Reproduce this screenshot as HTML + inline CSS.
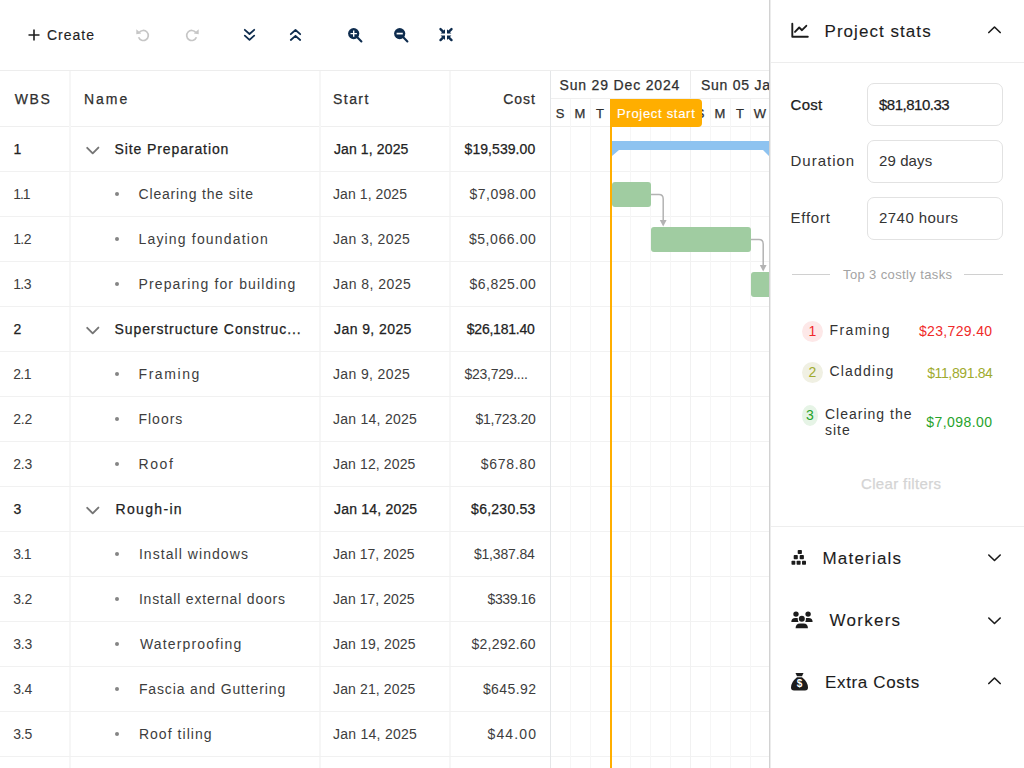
<!DOCTYPE html>
<html><head><meta charset="utf-8"><style>
html,body{margin:0;padding:0}
body{width:1024px;height:768px;overflow:hidden;position:relative;background:#fff;font-family:"Liberation Sans",sans-serif}
.t{position:absolute;line-height:1;white-space:nowrap}
.r{position:absolute}
svg{position:absolute;overflow:visible}
</style></head><body>
<svg style="left:28px;top:29px" width="12" height="12" viewBox="0 0 12 12"><path d="M6 0.5V11.5M0.5 6H11.5" stroke="#1f1f1f" stroke-width="1.6" fill="none"/></svg>
<div class="t" style="left:47px;top:27.5px;font-size:14px;font-weight:400;color:#1f1f1f;letter-spacing:1.0px;-webkit-text-stroke:0.15px #1f1f1f;">Create</div>
<svg style="left:136px;top:28px" width="13" height="13" viewBox="0 0 13 13"><path d="M3.2 4.6 A5 5 0 1 1 2.6 9.2" stroke="#c6c6c6" stroke-width="1.7" fill="none"/><path d="M0.3 1.2 L5.2 5.6 L0.3 6.2 Z" fill="#c6c6c6"/></svg>
<svg style="left:186px;top:28px" width="13" height="13" viewBox="0 0 13 13"><g transform="translate(13 0) scale(-1 1)"><path d="M3.2 4.6 A5 5 0 1 1 2.6 9.2" stroke="#c6c6c6" stroke-width="1.7" fill="none"/><path d="M0.3 1.2 L5.2 5.6 L0.3 6.2 Z" fill="#c6c6c6"/></g></svg>
<svg style="left:244px;top:29px" width="11" height="12" viewBox="0 0 11 12"><path d="M0.8 0.8 L5.5 5 L10.2 0.8 M0.8 6.6 L5.5 10.8 L10.2 6.6" stroke="#0e2c4e" stroke-width="1.8" fill="none" stroke-linecap="round" stroke-linejoin="round"/></svg>
<svg style="left:289.5px;top:28.5px" width="11" height="12" viewBox="0 0 11 12"><path d="M0.8 5.2 L5.5 1 L10.2 5.2 M0.8 11 L5.5 6.8 L10.2 11" stroke="#0e2c4e" stroke-width="1.8" fill="none" stroke-linecap="round" stroke-linejoin="round"/></svg>
<svg style="left:347.7px;top:27.7px" width="15" height="14" viewBox="0 0 15 14"><circle cx="5.7" cy="5.6" r="5.6" fill="#0e2c4e"/><path d="M9.3 9.3 L13.4 13.4" stroke="#0e2c4e" stroke-width="2.1" stroke-linecap="round"/><path d="M5.7 2.4 V8.8 M2.5 5.6 H8.9" stroke="#fff" stroke-width="1.4"/></svg>
<svg style="left:393.5px;top:27.7px" width="15" height="14" viewBox="0 0 15 14"><circle cx="5.7" cy="5.6" r="5.6" fill="#0e2c4e"/><path d="M9.3 9.3 L13.4 13.4" stroke="#0e2c4e" stroke-width="2.1" stroke-linecap="round"/><path d="M2.6 5.6 H8.8" stroke="#fff" stroke-width="1.7"/></svg>
<svg style="left:438.5px;top:28px" width="14" height="14" viewBox="-7 -6.5 14 14"><g fill="#0e2c4e"><g transform="translate(-0.1 0)"><path d="M-0.9 -5.3 V-0.9 H-5.3 Z"/><path d="M-5.4 -5.4 L-2.6 -2.6" stroke="#0e2c4e" stroke-width="2.4" stroke-linecap="round"/></g><g transform="translate(0.1 0) scale(-1 1)"><path d="M-0.9 -5.3 V-0.9 H-5.3 Z"/><path d="M-5.4 -5.4 L-2.6 -2.6" stroke="#0e2c4e" stroke-width="2.4" stroke-linecap="round"/></g><g transform="translate(-0.1 0.2) scale(1 -1)"><path d="M-0.9 -5.3 V-0.9 H-5.3 Z"/><path d="M-5.4 -5.4 L-2.6 -2.6" stroke="#0e2c4e" stroke-width="2.4" stroke-linecap="round"/></g><g transform="translate(0.1 0.2) scale(-1 -1)"><path d="M-0.9 -5.3 V-0.9 H-5.3 Z"/><path d="M-5.4 -5.4 L-2.6 -2.6" stroke="#0e2c4e" stroke-width="2.4" stroke-linecap="round"/></g></g></svg>
<div class="r" style="left:0px;top:70px;width:769px;height:1px;background:#ededed;"></div>
<div class="r" style="left:0px;top:126px;width:769px;height:1px;background:#efefef;"></div>
<div class="r" style="left:69px;top:71px;width:2px;height:697px;background:#f6f6f6;"></div>
<div class="r" style="left:319px;top:71px;width:2px;height:697px;background:#f6f6f6;"></div>
<div class="r" style="left:449px;top:71px;width:2px;height:697px;background:#f6f6f6;"></div>
<div class="r" style="left:550px;top:71px;width:1px;height:697px;background:#e4e6e8;"></div>
<div class="r" style="left:0px;top:171px;width:550px;height:1px;background:#f1f1f1;"></div>
<div class="r" style="left:551px;top:171px;width:218px;height:1px;background:#f2f2f2;"></div>
<div class="r" style="left:0px;top:216px;width:550px;height:1px;background:#f1f1f1;"></div>
<div class="r" style="left:551px;top:216px;width:218px;height:1px;background:#f2f2f2;"></div>
<div class="r" style="left:0px;top:261px;width:550px;height:1px;background:#f1f1f1;"></div>
<div class="r" style="left:551px;top:261px;width:218px;height:1px;background:#f2f2f2;"></div>
<div class="r" style="left:0px;top:306px;width:550px;height:1px;background:#f1f1f1;"></div>
<div class="r" style="left:551px;top:306px;width:218px;height:1px;background:#f2f2f2;"></div>
<div class="r" style="left:0px;top:351px;width:550px;height:1px;background:#f1f1f1;"></div>
<div class="r" style="left:551px;top:351px;width:218px;height:1px;background:#f2f2f2;"></div>
<div class="r" style="left:0px;top:396px;width:550px;height:1px;background:#f1f1f1;"></div>
<div class="r" style="left:551px;top:396px;width:218px;height:1px;background:#f2f2f2;"></div>
<div class="r" style="left:0px;top:441px;width:550px;height:1px;background:#f1f1f1;"></div>
<div class="r" style="left:551px;top:441px;width:218px;height:1px;background:#f2f2f2;"></div>
<div class="r" style="left:0px;top:486px;width:550px;height:1px;background:#f1f1f1;"></div>
<div class="r" style="left:551px;top:486px;width:218px;height:1px;background:#f2f2f2;"></div>
<div class="r" style="left:0px;top:531px;width:550px;height:1px;background:#f1f1f1;"></div>
<div class="r" style="left:551px;top:531px;width:218px;height:1px;background:#f2f2f2;"></div>
<div class="r" style="left:0px;top:576px;width:550px;height:1px;background:#f1f1f1;"></div>
<div class="r" style="left:551px;top:576px;width:218px;height:1px;background:#f2f2f2;"></div>
<div class="r" style="left:0px;top:621px;width:550px;height:1px;background:#f1f1f1;"></div>
<div class="r" style="left:551px;top:621px;width:218px;height:1px;background:#f2f2f2;"></div>
<div class="r" style="left:0px;top:666px;width:550px;height:1px;background:#f1f1f1;"></div>
<div class="r" style="left:551px;top:666px;width:218px;height:1px;background:#f2f2f2;"></div>
<div class="r" style="left:0px;top:711px;width:550px;height:1px;background:#f1f1f1;"></div>
<div class="r" style="left:551px;top:711px;width:218px;height:1px;background:#f2f2f2;"></div>
<div class="r" style="left:0px;top:756px;width:550px;height:1px;background:#f1f1f1;"></div>
<div class="r" style="left:551px;top:756px;width:218px;height:1px;background:#f2f2f2;"></div>
<div class="t" style="left:14.8px;top:92px;font-size:14px;font-weight:400;color:#2f2f2f;letter-spacing:1.6px;-webkit-text-stroke:0.25px #2f2f2f;">WBS</div>
<div class="t" style="left:84px;top:92px;font-size:14px;font-weight:400;color:#2f2f2f;letter-spacing:1.95px;-webkit-text-stroke:0.25px #2f2f2f;">Name</div>
<div class="t" style="left:333px;top:92px;font-size:14px;font-weight:400;color:#2f2f2f;letter-spacing:1.45px;-webkit-text-stroke:0.25px #2f2f2f;">Start</div>
<div class="t" style="right:488px;top:92px;font-size:14px;font-weight:400;color:#2f2f2f;letter-spacing:1.0px;-webkit-text-stroke:0.25px #2f2f2f;">Cost</div>
<div class="t" style="left:13.5px;top:142.2px;font-size:14px;font-weight:400;color:#222;letter-spacing:0px;-webkit-text-stroke:0.25px #222;">1</div>
<svg style="left:87px;top:146.0px" width="13" height="8" viewBox="0 0 13 8"><path d="M0.2 1.8 L5.7 7.3 L11.4 1.6" stroke="#757575" stroke-width="1.9" fill="none" stroke-linecap="round" stroke-linejoin="round"/></svg>
<div class="t" style="left:114.5px;top:142.2px;font-size:14px;font-weight:400;color:#222;letter-spacing:0.9px;-webkit-text-stroke:0.25px #222;">Site Preparation</div>
<div class="t" style="left:333.9px;top:142.2px;font-size:14px;font-weight:400;color:#222;letter-spacing:0.13px;-webkit-text-stroke:0.25px #222;">Jan 1, 2025</div>
<div class="t" style="left:464.6px;top:142.2px;font-size:14px;font-weight:400;color:#222;letter-spacing:0.056px;-webkit-text-stroke:0.25px #222;">$19,539.00</div>
<div class="t" style="left:13.2px;top:187.2px;font-size:14px;font-weight:400;color:#3d3d3d;letter-spacing:-1.0px;">1.1</div>
<div class="r" style="left:114.5px;top:192.0px;width:4.4px;height:4.4px;border-radius:50%;background:#858585"></div>
<div class="t" style="left:138.5px;top:187.2px;font-size:14px;font-weight:400;color:#3d3d3d;letter-spacing:0.83px;">Clearing the site</div>
<div class="t" style="left:333.0px;top:187.2px;font-size:14px;font-weight:400;color:#3d3d3d;letter-spacing:0.08px;">Jan 1, 2025</div>
<div class="t" style="left:469.4px;top:187.2px;font-size:14px;font-weight:400;color:#3d3d3d;letter-spacing:0.513px;">$7,098.00</div>
<div class="t" style="left:13.2px;top:232.2px;font-size:14px;font-weight:400;color:#3d3d3d;letter-spacing:-0.6px;">1.2</div>
<div class="r" style="left:114.5px;top:237.0px;width:4.4px;height:4.4px;border-radius:50%;background:#858585"></div>
<div class="t" style="left:138.5px;top:232.2px;font-size:14px;font-weight:400;color:#3d3d3d;letter-spacing:1.17px;">Laying foundation</div>
<div class="t" style="left:333.0px;top:232.2px;font-size:14px;font-weight:400;color:#3d3d3d;letter-spacing:0.37px;">Jan 3, 2025</div>
<div class="t" style="left:468.9px;top:232.2px;font-size:14px;font-weight:400;color:#3d3d3d;letter-spacing:0.575px;">$5,066.00</div>
<div class="t" style="left:13.2px;top:277.2px;font-size:14px;font-weight:400;color:#3d3d3d;letter-spacing:-0.6px;">1.3</div>
<div class="r" style="left:114.5px;top:282.0px;width:4.4px;height:4.4px;border-radius:50%;background:#858585"></div>
<div class="t" style="left:138.5px;top:277.2px;font-size:14px;font-weight:400;color:#3d3d3d;letter-spacing:1.13px;">Preparing for building</div>
<div class="t" style="left:333.0px;top:277.2px;font-size:14px;font-weight:400;color:#3d3d3d;letter-spacing:0.47px;">Jan 8, 2025</div>
<div class="t" style="left:469.4px;top:277.2px;font-size:14px;font-weight:400;color:#3d3d3d;letter-spacing:0.513px;">$6,825.00</div>
<div class="t" style="left:13.5px;top:322.2px;font-size:14px;font-weight:400;color:#222;letter-spacing:0px;-webkit-text-stroke:0.25px #222;">2</div>
<svg style="left:87px;top:326.0px" width="13" height="8" viewBox="0 0 13 8"><path d="M0.2 1.8 L5.7 7.3 L11.4 1.6" stroke="#757575" stroke-width="1.9" fill="none" stroke-linecap="round" stroke-linejoin="round"/></svg>
<div class="t" style="left:114.5px;top:322.2px;font-size:14px;font-weight:400;color:#222;letter-spacing:0.91px;-webkit-text-stroke:0.25px #222;">Superstructure Construc...</div>
<div class="t" style="left:334.0px;top:322.2px;font-size:14px;font-weight:400;color:#222;letter-spacing:0.42px;-webkit-text-stroke:0.25px #222;">Jan 9, 2025</div>
<div class="t" style="left:466.8px;top:322.2px;font-size:14px;font-weight:400;color:#222;letter-spacing:-0.233px;-webkit-text-stroke:0.25px #222;">$26,181.40</div>
<div class="t" style="left:13.2px;top:367.2px;font-size:14px;font-weight:400;color:#3d3d3d;letter-spacing:-0.6px;">2.1</div>
<div class="r" style="left:114.5px;top:372.0px;width:4.4px;height:4.4px;border-radius:50%;background:#858585"></div>
<div class="t" style="left:138.5px;top:367.2px;font-size:14px;font-weight:400;color:#3d3d3d;letter-spacing:1.58px;">Framing</div>
<div class="t" style="left:333.0px;top:367.2px;font-size:14px;font-weight:400;color:#3d3d3d;letter-spacing:0.37px;">Jan 9, 2025</div>
<div class="t" style="left:464.6px;top:367.2px;font-size:14px;font-weight:400;color:#3d3d3d;letter-spacing:-0.28px;">$23,729....</div>
<div class="t" style="left:13.2px;top:412.2px;font-size:14px;font-weight:400;color:#3d3d3d;letter-spacing:-0.2px;">2.2</div>
<div class="r" style="left:114.5px;top:417.0px;width:4.4px;height:4.4px;border-radius:50%;background:#858585"></div>
<div class="t" style="left:138.5px;top:412.2px;font-size:14px;font-weight:400;color:#3d3d3d;letter-spacing:0.98px;">Floors</div>
<div class="t" style="left:333.0px;top:412.2px;font-size:14px;font-weight:400;color:#3d3d3d;letter-spacing:0.264px;">Jan 14, 2025</div>
<div class="t" style="left:475.4px;top:412.2px;font-size:14px;font-weight:400;color:#3d3d3d;letter-spacing:-0.237px;">$1,723.20</div>
<div class="t" style="left:13.2px;top:457.2px;font-size:14px;font-weight:400;color:#3d3d3d;letter-spacing:-0.2px;">2.3</div>
<div class="r" style="left:114.5px;top:462.0px;width:4.4px;height:4.4px;border-radius:50%;background:#858585"></div>
<div class="t" style="left:138.5px;top:457.2px;font-size:14px;font-weight:400;color:#3d3d3d;letter-spacing:1.57px;">Roof</div>
<div class="t" style="left:333.0px;top:457.2px;font-size:14px;font-weight:400;color:#3d3d3d;letter-spacing:0.127px;">Jan 12, 2025</div>
<div class="t" style="left:480.7px;top:457.2px;font-size:14px;font-weight:400;color:#3d3d3d;letter-spacing:0.7px;">$678.80</div>
<div class="t" style="left:13.5px;top:502.2px;font-size:14px;font-weight:400;color:#222;letter-spacing:0px;-webkit-text-stroke:0.25px #222;">3</div>
<svg style="left:87px;top:506.0px" width="13" height="8" viewBox="0 0 13 8"><path d="M0.2 1.8 L5.7 7.3 L11.4 1.6" stroke="#757575" stroke-width="1.9" fill="none" stroke-linecap="round" stroke-linejoin="round"/></svg>
<div class="t" style="left:115.5px;top:502.2px;font-size:14px;font-weight:400;color:#222;letter-spacing:1.33px;-webkit-text-stroke:0.25px #222;">Rough-in</div>
<div class="t" style="left:334.0px;top:502.2px;font-size:14px;font-weight:400;color:#222;letter-spacing:0.2px;-webkit-text-stroke:0.25px #222;">Jan 14, 2025</div>
<div class="t" style="left:471.1px;top:502.2px;font-size:14px;font-weight:400;color:#222;letter-spacing:0.25px;-webkit-text-stroke:0.25px #222;">$6,230.53</div>
<div class="t" style="left:13.2px;top:547.2px;font-size:14px;font-weight:400;color:#3d3d3d;letter-spacing:-0.6px;">3.1</div>
<div class="r" style="left:114.5px;top:552.0px;width:4.4px;height:4.4px;border-radius:50%;background:#858585"></div>
<div class="t" style="left:138.9px;top:547.2px;font-size:14px;font-weight:400;color:#3d3d3d;letter-spacing:1.06px;">Install windows</div>
<div class="t" style="left:333.0px;top:547.2px;font-size:14px;font-weight:400;color:#3d3d3d;letter-spacing:0.055px;">Jan 17, 2025</div>
<div class="t" style="left:473.9px;top:547.2px;font-size:14px;font-weight:400;color:#3d3d3d;letter-spacing:-0.175px;">$1,387.84</div>
<div class="t" style="left:13.2px;top:592.2px;font-size:14px;font-weight:400;color:#3d3d3d;letter-spacing:-0.2px;">3.2</div>
<div class="r" style="left:114.5px;top:597.0px;width:4.4px;height:4.4px;border-radius:50%;background:#858585"></div>
<div class="t" style="left:138.9px;top:592.2px;font-size:14px;font-weight:400;color:#3d3d3d;letter-spacing:0.81px;">Install external doors</div>
<div class="t" style="left:333.0px;top:592.2px;font-size:14px;font-weight:400;color:#3d3d3d;letter-spacing:0.055px;">Jan 17, 2025</div>
<div class="t" style="left:487.6px;top:592.2px;font-size:14px;font-weight:400;color:#3d3d3d;letter-spacing:-0.417px;">$339.16</div>
<div class="t" style="left:13.2px;top:637.2px;font-size:14px;font-weight:400;color:#3d3d3d;letter-spacing:-0.2px;">3.3</div>
<div class="r" style="left:114.5px;top:642.0px;width:4.4px;height:4.4px;border-radius:50%;background:#858585"></div>
<div class="t" style="left:139.9px;top:637.2px;font-size:14px;font-weight:400;color:#3d3d3d;letter-spacing:1.17px;">Waterproofing</div>
<div class="t" style="left:333.0px;top:637.2px;font-size:14px;font-weight:400;color:#3d3d3d;letter-spacing:0.145px;">Jan 19, 2025</div>
<div class="t" style="left:471.5px;top:637.2px;font-size:14px;font-weight:400;color:#3d3d3d;letter-spacing:0.225px;">$2,292.60</div>
<div class="t" style="left:13.2px;top:682.2px;font-size:14px;font-weight:400;color:#3d3d3d;letter-spacing:-0.2px;">3.4</div>
<div class="r" style="left:114.5px;top:687.0px;width:4.4px;height:4.4px;border-radius:50%;background:#858585"></div>
<div class="t" style="left:138.9px;top:682.2px;font-size:14px;font-weight:400;color:#3d3d3d;letter-spacing:0.86px;">Fascia and Guttering</div>
<div class="t" style="left:333.0px;top:682.2px;font-size:14px;font-weight:400;color:#3d3d3d;letter-spacing:0.127px;">Jan 21, 2025</div>
<div class="t" style="left:482.9px;top:682.2px;font-size:14px;font-weight:400;color:#3d3d3d;letter-spacing:0.433px;">$645.92</div>
<div class="t" style="left:13.2px;top:727.2px;font-size:14px;font-weight:400;color:#3d3d3d;letter-spacing:-0.2px;">3.5</div>
<div class="r" style="left:114.5px;top:732.0px;width:4.4px;height:4.4px;border-radius:50%;background:#858585"></div>
<div class="t" style="left:138.9px;top:727.2px;font-size:14px;font-weight:400;color:#3d3d3d;letter-spacing:1.04px;">Roof tiling</div>
<div class="t" style="left:333.0px;top:727.2px;font-size:14px;font-weight:400;color:#3d3d3d;letter-spacing:0.264px;">Jan 14, 2025</div>
<div class="t" style="left:487.6px;top:727.2px;font-size:14px;font-weight:400;color:#3d3d3d;letter-spacing:1.1px;">$44.00</div>
<div class="r" style="left:551px;top:98px;width:218px;height:1px;background:#efefef;"></div>
<div class="r" style="left:690px;top:71px;width:1px;height:55px;background:#ececec;"></div>
<div class="r" style="left:570px;top:99px;width:1px;height:669px;background:#f6f6f6;"></div>
<div class="r" style="left:590px;top:99px;width:1px;height:669px;background:#f6f6f6;"></div>
<div class="r" style="left:610px;top:99px;width:1px;height:669px;background:#f6f6f6;"></div>
<div class="r" style="left:630px;top:99px;width:1px;height:669px;background:#f6f6f6;"></div>
<div class="r" style="left:650px;top:99px;width:1px;height:669px;background:#f6f6f6;"></div>
<div class="r" style="left:670px;top:99px;width:1px;height:669px;background:#f6f6f6;"></div>
<div class="r" style="left:690px;top:99px;width:1px;height:669px;background:#f1f1f1;"></div>
<div class="r" style="left:710px;top:99px;width:1px;height:669px;background:#f6f6f6;"></div>
<div class="r" style="left:730px;top:99px;width:1px;height:669px;background:#f6f6f6;"></div>
<div class="r" style="left:750px;top:99px;width:1px;height:669px;background:#f6f6f6;"></div>
<div class="t" style="left:559.5px;top:78px;font-size:14px;font-weight:400;color:#2f2f2f;letter-spacing:0.83px;-webkit-text-stroke:0.25px #2f2f2f;">Sun 29 Dec 2024</div>
<div class="t" style="left:701px;top:78px;font-size:14px;font-weight:400;color:#2f2f2f;letter-spacing:0.75px;width:67.5px;overflow:hidden;-webkit-text-stroke:0.25px #2f2f2f;">Sun 05 Ja</div>
<div class="t" style="left:460px;width:200px;text-align:center;top:106.5px;font-size:13px;font-weight:400;color:#2f2f2f;letter-spacing:0px;-webkit-text-stroke:0.25px #2f2f2f;">S</div>
<div class="t" style="left:480px;width:200px;text-align:center;top:106.5px;font-size:13px;font-weight:400;color:#2f2f2f;letter-spacing:0px;-webkit-text-stroke:0.25px #2f2f2f;">M</div>
<div class="t" style="left:500px;width:200px;text-align:center;top:106.5px;font-size:13px;font-weight:400;color:#2f2f2f;letter-spacing:0px;-webkit-text-stroke:0.25px #2f2f2f;">T</div>
<div class="t" style="left:520px;width:200px;text-align:center;top:106.5px;font-size:13px;font-weight:400;color:#2f2f2f;letter-spacing:0px;-webkit-text-stroke:0.25px #2f2f2f;">W</div>
<div class="t" style="left:540px;width:200px;text-align:center;top:106.5px;font-size:13px;font-weight:400;color:#2f2f2f;letter-spacing:0px;-webkit-text-stroke:0.25px #2f2f2f;">T</div>
<div class="t" style="left:560px;width:200px;text-align:center;top:106.5px;font-size:13px;font-weight:400;color:#2f2f2f;letter-spacing:0px;-webkit-text-stroke:0.25px #2f2f2f;">F</div>
<div class="t" style="left:580px;width:200px;text-align:center;top:106.5px;font-size:13px;font-weight:400;color:#2f2f2f;letter-spacing:0px;-webkit-text-stroke:0.25px #2f2f2f;">S</div>
<div class="t" style="left:600px;width:200px;text-align:center;top:106.5px;font-size:13px;font-weight:400;color:#2f2f2f;letter-spacing:0px;-webkit-text-stroke:0.25px #2f2f2f;">S</div>
<div class="t" style="left:620px;width:200px;text-align:center;top:106.5px;font-size:13px;font-weight:400;color:#2f2f2f;letter-spacing:0px;-webkit-text-stroke:0.25px #2f2f2f;">M</div>
<div class="t" style="left:640px;width:200px;text-align:center;top:106.5px;font-size:13px;font-weight:400;color:#2f2f2f;letter-spacing:0px;-webkit-text-stroke:0.25px #2f2f2f;">T</div>
<div class="t" style="left:660px;width:200px;text-align:center;top:106.5px;font-size:13px;font-weight:400;color:#2f2f2f;letter-spacing:0px;-webkit-text-stroke:0.25px #2f2f2f;">W</div>
<div class="r" style="left:610px;top:99px;width:2px;height:669px;background:#ffae00;"></div>
<div class="r" style="left:610px;top:99px;width:92px;height:28px;background:#ffae00;border-radius:0 4px 4px 0"></div>
<div class="t" style="left:617px;top:106.8px;font-size:13px;font-weight:400;color:#fff;letter-spacing:0.7px;-webkit-text-stroke:0.15px #fff;">Project start</div>
<svg style="left:612px;top:141px" width="157" height="16" viewBox="0 0 157 16"><path d="M0 0 H157 V15 L151 9 H7 L0 15 Z" fill="#8ec3f0"/></svg>
<div class="r" style="left:612px;top:182px;width:39px;height:25px;background:#a0cca1;border-radius:3px"></div>
<div class="r" style="left:651px;top:227px;width:100px;height:25px;background:#a0cca1;border-radius:3px"></div>
<div class="r" style="left:751px;top:272px;width:18px;height:25px;background:#a0cca1;border-radius:3px 0 0 3px"></div>
<svg style="left:651px;top:190px" width="20" height="40" viewBox="0 0 20 40"><path d="M0 4.5 H8 Q12.2 4.5 12.2 9 V30" stroke="#b3b3b3" stroke-width="1.5" fill="none"/><path d="M8.8 30 H15.6 L12.2 36.5 Z" fill="#b3b3b3"/></svg>
<svg style="left:751px;top:235px" width="20" height="40" viewBox="0 0 20 40"><path d="M0 4.5 H8 Q12.2 4.5 12.2 9 V30" stroke="#b3b3b3" stroke-width="1.5" fill="none"/><path d="M8.8 30 H15.6 L12.2 36.5 Z" fill="#b3b3b3"/></svg>
<div class="r" style="left:770px;top:0px;width:254px;height:768px;background:#fff;"></div>
<div class="r" style="left:769px;top:0px;width:1px;height:768px;background:#d2d2d2;"></div>
<div class="r" style="left:770px;top:0px;width:1px;height:768px;background:#ececec;"></div>
<div class="r" style="left:771px;top:62px;width:253px;height:1px;background:#ededed;"></div>
<svg style="left:791px;top:23px" width="17" height="15" viewBox="0 0 17 15"><path d="M1.3 0.8 V13.8 H16.8" stroke="#1c1c1c" stroke-width="1.9" fill="none" stroke-linecap="round" stroke-linejoin="round"/><path d="M4 8.9 L8.2 4.5 L11 7.2 L15.3 2.8" stroke="#1c1c1c" stroke-width="1.9" fill="none" stroke-linejoin="round" stroke-linecap="round"/></svg>
<div class="t" style="left:824.5px;top:23px;font-size:17px;font-weight:400;color:#1c1c1c;letter-spacing:1.05px;-webkit-text-stroke:0.1px #1c1c1c;">Project stats</div>
<svg style="left:987.5px;top:26.3px" width="13" height="7" viewBox="0 0 13 7"><path d="M0.8 6.5 L6.5 1 L12.2 6.5" stroke="#1c1c1c" stroke-width="1.65" fill="none" stroke-linecap="round" stroke-linejoin="round"/></svg>
<div class="r" style="left:867px;top:83px;width:134px;height:41px;border:1px solid #e2e2e2;border-radius:7px"></div>
<div class="t" style="left:790.5px;top:96.7px;font-size:15px;font-weight:400;color:#1c1c1c;letter-spacing:0.3px;-webkit-text-stroke:0.25px #1c1c1c;">Cost</div>
<div class="t" style="left:879px;top:96.7px;font-size:15px;font-weight:400;color:#1c1c1c;letter-spacing:-0.5px;-webkit-text-stroke:0.25px #1c1c1c;">$81,810.33</div>
<div class="r" style="left:867px;top:140px;width:134px;height:41px;border:1px solid #e2e2e2;border-radius:7px"></div>
<div class="t" style="left:790.5px;top:153.2px;font-size:15px;font-weight:400;color:#333;letter-spacing:1.0px;">Duration</div>
<div class="t" style="left:879px;top:153.2px;font-size:15px;font-weight:400;color:#333;letter-spacing:0.1px;">29 days</div>
<div class="r" style="left:867px;top:196.5px;width:134px;height:41px;border:1px solid #e2e2e2;border-radius:7px"></div>
<div class="t" style="left:790.5px;top:210.2px;font-size:15px;font-weight:400;color:#333;letter-spacing:0.75px;">Effort</div>
<div class="t" style="left:879px;top:210.2px;font-size:15px;font-weight:400;color:#333;letter-spacing:0.45px;">2740 hours</div>
<div class="r" style="left:791.5px;top:274px;width:38.5px;height:1px;background:#d0d0d0;"></div>
<div class="r" style="left:964px;top:274px;width:38.5px;height:1px;background:#d0d0d0;"></div>
<div class="t" style="left:843px;top:268px;font-size:13px;font-weight:400;color:#a3a3a3;letter-spacing:0.38px;">Top 3 costly tasks</div>
<div class="r" style="left:801.8px;top:320.5px;width:21px;height:21px;border-radius:50%;background:#fde8e8"></div>
<div class="t" style="left:712.3px;width:200px;text-align:center;top:324px;font-size:14px;font-weight:400;color:#f02a2a;letter-spacing:0px;">1</div>
<div class="t" style="left:829.5px;top:323px;font-size:14px;font-weight:400;color:#333;letter-spacing:1.45px;">Framing</div>
<div class="t" style="right:31.5px;top:324.3px;font-size:14px;font-weight:400;color:#f02a2a;letter-spacing:0.35px;">$23,729.40</div>
<div class="r" style="left:802.0px;top:362.2px;width:21px;height:21px;border-radius:50%;background:#f0f0e3"></div>
<div class="t" style="left:712.5px;width:200px;text-align:center;top:365.2px;font-size:14px;font-weight:400;color:#a0ab2e;letter-spacing:0px;">2</div>
<div class="t" style="left:829.5px;top:364.2px;font-size:14px;font-weight:400;color:#333;letter-spacing:1.2px;">Cladding</div>
<div class="t" style="right:31.5px;top:365.5px;font-size:14px;font-weight:400;color:#a0ab2e;letter-spacing:-0.37px;">$11,891.84</div>
<div class="r" style="left:802.0px;top:404.8px;width:16px;height:21px;border-radius:50%;background:#e6f4e6"></div>
<div class="t" style="left:710px;width:200px;text-align:center;top:407.7px;font-size:14px;font-weight:400;color:#27a32c;letter-spacing:0px;">3</div>
<div class="t" style="left:825px;top:406.7px;font-size:14px;font-weight:400;color:#333;letter-spacing:1.0px;">Clearing the</div>
<div class="t" style="right:31.5px;top:415px;font-size:14px;font-weight:400;color:#27a32c;letter-spacing:0.45px;">$7,098.00</div>
<div class="t" style="left:825px;top:423.1px;font-size:14px;font-weight:400;color:#333;letter-spacing:1.0px;">site</div>
<div class="t" style="left:861px;top:476.2px;font-size:15px;font-weight:400;color:#d4d4d4;letter-spacing:0.35px;-webkit-text-stroke:0.25px #d4d4d4;">Clear filters</div>
<div class="r" style="left:771px;top:526px;width:253px;height:1px;background:#eeeeee;"></div>
<svg style="left:791px;top:550px" width="16" height="16" viewBox="0 0 16 16"><g fill="#1c1c1c"><rect x="6.7" y="0" width="4.2" height="4" rx="0.8"/><rect x="2.7" y="5.1" width="4.1" height="4.2" rx="0.8"/><rect x="8.7" y="5.1" width="4.2" height="4.2" rx="0.8"/><rect x="0.5" y="10.8" width="3.8" height="4" rx="0.7"/><rect x="5.6" y="10.8" width="4" height="4" rx="0.7"/><rect x="11" y="10.8" width="4" height="4" rx="0.7"/></g></svg>
<div class="t" style="left:822.5px;top:550.1px;font-size:17px;font-weight:400;color:#1c1c1c;letter-spacing:1.2px;-webkit-text-stroke:0.1px #1c1c1c;">Materials</div>
<svg style="left:987.5px;top:554px" width="13" height="8" viewBox="0 0 13 8"><path d="M0.8 1 L6.5 6.5 L12.2 1" stroke="#1c1c1c" stroke-width="1.65" fill="none" stroke-linecap="round" stroke-linejoin="round"/></svg>
<svg style="left:791px;top:611px" width="22" height="18" viewBox="0 0 22 18"><g fill="#1c1c1c"><circle cx="5" cy="3.1" r="2.7"/><circle cx="17.1" cy="3.1" r="2.7"/><path d="M0.3 11 Q0.3 7 4.3 7 H7.5 V11 Z"/><path d="M21.6 11 Q21.6 7 17.6 7 H14.4 V11 Z"/><circle cx="10.8" cy="7.8" r="4.1" fill="#fff"/><circle cx="10.8" cy="7.8" r="3"/><path d="M4.6 17.2 Q4.6 12.4 9 12.4 H12.5 Q16.9 12.4 16.9 17.2 Z"/></g></svg>
<div class="t" style="left:829.5px;top:611.7px;font-size:17px;font-weight:400;color:#1c1c1c;letter-spacing:1.27px;-webkit-text-stroke:0.1px #1c1c1c;">Workers</div>
<svg style="left:987.5px;top:616.5px" width="13" height="8" viewBox="0 0 13 8"><path d="M0.8 1 L6.5 6.5 L12.2 1" stroke="#1c1c1c" stroke-width="1.65" fill="none" stroke-linecap="round" stroke-linejoin="round"/></svg>
<svg style="left:791px;top:672.5px" width="17" height="18" viewBox="0 0 17 18"><g fill="#1c1c1c"><path d="M4.5 0 H12.5 L11 3.2 H6 Z"/><path d="M6 4.2 H11 Q17 9 17 14.5 Q17 17.5 14 17.5 H3 Q0 17.5 0 14.5 Q0 9 6 4.2 Z"/></g><text x="8.5" y="13.9" font-size="10" font-weight="700" fill="#fff" text-anchor="middle" font-family="Liberation Sans">$</text></svg>
<div class="t" style="left:825px;top:673.6px;font-size:17px;font-weight:400;color:#1c1c1c;letter-spacing:0.65px;-webkit-text-stroke:0.1px #1c1c1c;">Extra Costs</div>
<svg style="left:987.5px;top:677.3px" width="13" height="7" viewBox="0 0 13 7"><path d="M0.8 6.5 L6.5 1 L12.2 6.5" stroke="#1c1c1c" stroke-width="1.65" fill="none" stroke-linecap="round" stroke-linejoin="round"/></svg>
</body></html>
